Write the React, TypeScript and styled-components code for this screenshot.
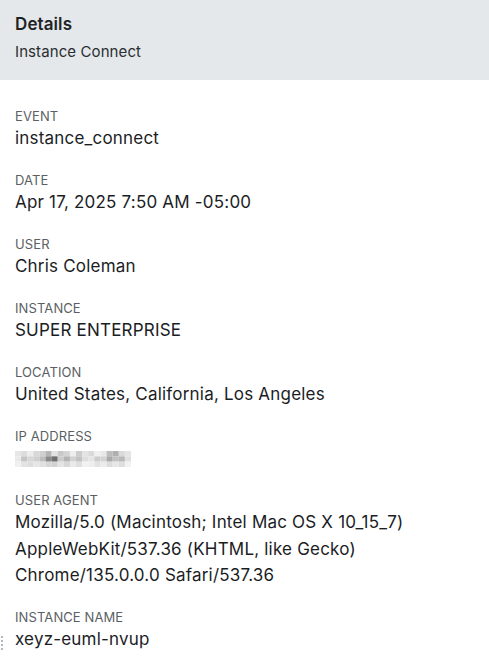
import React from "react";
import styled, { createGlobalStyle } from "styled-components";

const Global = createGlobalStyle`
  html, body { margin: 0; padding: 0; background: #ffffff; }
  body { font-family: Inter, "Noto Sans", sans-serif; -webkit-font-smoothing: antialiased; }
`;

const Panel = styled.div`
  position: relative;
  width: 489px;
  min-height: 661px;
  background: #ffffff;
`;

const Header = styled.header`
  height: 80px;
  box-sizing: border-box;
  padding: 12px 15px 0;
  background: #e4e8eb;
  display: flex;
  flex-direction: column;
`;

const Title = styled.h1`
  margin: 0;
  font-size: 17px;
  line-height: 24px;
  font-weight: 600;
  letter-spacing: 0.1px;
  color: #1f2326;
`;

const Subtitle = styled.div`
  margin-top: 5px;
  font-size: 15px;
  line-height: 22px;
  letter-spacing: 0.1px;
  color: #2a2e31;
`;

const Body = styled.dl`
  margin: 0;
  padding: 27px 15px 0;
  display: flex;
  flex-direction: column;
  gap: 19.5px;
`;

const Field = styled.div`
  display: flex;
  flex-direction: column;
`;

const Label = styled.dt`
  font-size: 13px;
  line-height: 18px;
  letter-spacing: 0.1px;
  color: #5b5f63;
  text-transform: uppercase;
`;

const Value = styled.dd`
  margin: 0;
  font-size: 17px;
  line-height: 26.5px;
  letter-spacing: 0.2px;
  color: #1b1d1f;
`;

const Blur = styled.svg`
  display: block;
  margin-top: 6px;
  margin-bottom: 4.5px;
`;

const Handle = styled.div`
  position: absolute;
  left: 1px;
  top: 636px;
  display: grid;
  grid-template-columns: 2px;
  gap: 2px;
`;

const Dot = styled.span`
  width: 2px;
  height: 2px;
  border-radius: 1px;
  background: #9aa0a5;
`;

const ipBlocks: [number, number, number, string][] = [
  [0, 0, 6, "#e6e6e6"], [6, 0, 6, "#dcdcdc"], [12, 0, 6, "#ececec"], [18, 0, 6, "#d8d8d8"],
  [24, 0, 6, "#cfcfcf"], [30, 0, 6, "#b5b5b5"], [36, 0, 6, "#e1e1e1"], [42, 0, 6, "#c8c8c8"],
  [48, 0, 6, "#d4d4d4"], [54, 0, 6, "#eeeeee"], [60, 0, 6, "#cccccc"], [66, 0, 6, "#e3e3e3"],
  [72, 0, 6, "#d9d9d9"], [78, 0, 6, "#efefef"], [84, 0, 6, "#e8e8e8"], [90, 0, 6, "#bcbcbc"],
  [96, 0, 6, "#b0b0b0"], [102, 0, 6, "#dadada"], [108, 0, 6, "#e5e5e5"],
  [0, 6, 6, "#e9e9e9"], [6, 6, 6, "#c5c5c5"], [12, 6, 6, "#d7d7d7"], [18, 6, 6, "#cfcfcf"],
  [24, 6, 6, "#bdbdbd"], [30, 6, 6, "#8a8a8a"], [36, 6, 6, "#6f6f6f"], [42, 6, 6, "#cbcbcb"],
  [48, 6, 6, "#b3b3b3"], [54, 6, 6, "#d2d2d2"], [60, 6, 6, "#c2c2c2"], [66, 6, 6, "#dedede"],
  [72, 6, 6, "#e4e4e4"], [78, 6, 6, "#cdcdcd"], [84, 6, 6, "#d3d3d3"], [90, 6, 6, "#a9a9a9"],
  [96, 6, 6, "#c0c0c0"], [102, 6, 6, "#b9b9b9"], [108, 6, 6, "#e0e0e0"],
  [0, 12, 6, "#f0f0f0"], [6, 12, 6, "#e3e3e3"], [12, 12, 6, "#dddddd"], [18, 12, 6, "#e6e6e6"],
  [24, 12, 6, "#e0e0e0"], [30, 12, 6, "#d6d6d6"], [36, 12, 6, "#d2d2d2"], [42, 12, 6, "#e4e4e4"],
  [48, 12, 6, "#d8d8d8"], [54, 12, 6, "#eaeaea"], [60, 12, 6, "#dfdfdf"], [66, 12, 6, "#f1f1f1"],
  [72, 12, 6, "#eeeeee"], [78, 12, 6, "#e2e2e2"], [84, 12, 6, "#ebebeb"], [90, 12, 6, "#dcdcdc"],
  [96, 12, 6, "#e7e7e7"], [102, 12, 6, "#dedede"], [108, 12, 6, "#f2f2f2"],
];

const fields: { label: string; value?: string[]; blurred?: boolean }[] = [
  { label: "Event", value: ["instance_connect"] },
  { label: "Date", value: ["Apr 17, 2025 7:50 AM -05:00"] },
  { label: "User", value: ["Chris Coleman"] },
  { label: "Instance", value: ["SUPER ENTERPRISE"] },
  { label: "Location", value: ["United States, California, Los Angeles"] },
  { label: "IP Address", blurred: true },
  {
    label: "User Agent",
    value: [
      "Mozilla/5.0 (Macintosh; Intel Mac OS X 10_15_7)",
      "AppleWebKit/537.36 (KHTML, like Gecko)",
      "Chrome/135.0.0.0 Safari/537.36",
    ],
  },
  { label: "Instance Name", value: ["xeyz-euml-nvup"] },
];

export default function App() {
  return (
    <>
      <Global />
      <Panel>
        <Header>
          <Title>Details</Title>
          <Subtitle>Instance Connect</Subtitle>
        </Header>
        <Body>
          {fields.map((f) => (
            <Field key={f.label}>
              <Label>{f.label}</Label>
              {f.blurred ? (
                <Blur width="116" height="16" viewBox="0 0 114 18" preserveAspectRatio="none">
                  {ipBlocks.map(([x, y, s, c], i) => (
                    <rect key={i} x={x} y={y} width={s} height={6} fill={c} />
                  ))}
                </Blur>
              ) : (
                <Value>
                  {f.value!.map((line, i) => (
                    <React.Fragment key={i}>
                      {i > 0 && <br />}
                      {line}
                    </React.Fragment>
                  ))}
                </Value>
              )}
            </Field>
          ))}
        </Body>
        <Handle>
          <Dot />
          <Dot />
          <Dot />
          <Dot />
        </Handle>
      </Panel>
    </>
  );
}
